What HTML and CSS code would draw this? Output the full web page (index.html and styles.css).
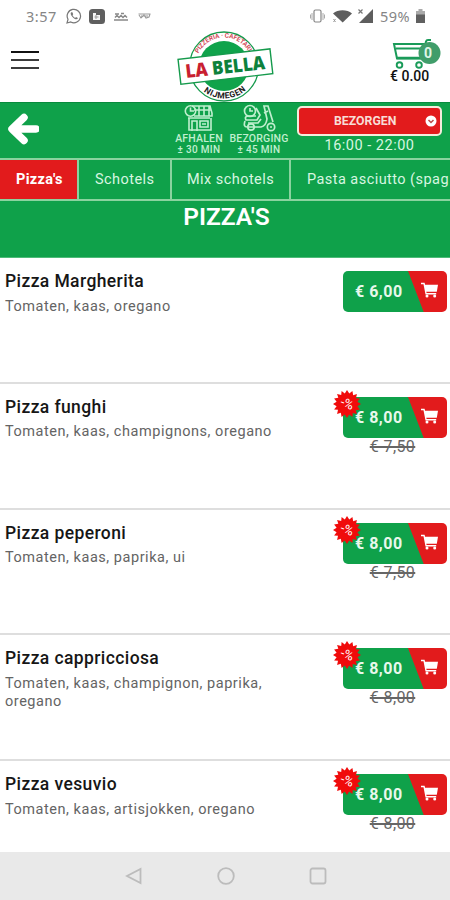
FILE: index.html
```html
<!DOCTYPE html>
<html lang="nl">
<head>
<meta charset="utf-8">
<title>La Bella</title>
<link rel="stylesheet" href="styles.css">
</head>
<body>
<svg class="sprite" aria-hidden="true">
  <symbol id="cart" viewBox="0 0 18 16">
    <path d="M0 .8h3.600l.5 2H17l-1.200 7H5.300l.3 1.200h9.600v1.400H4.500L2.500 2.200H0z"/>
    <circle cx="6" cy="14" r="1.500"/><circle cx="13.700" cy="14" r="1.500"/>
  </symbol>
  <symbol id="burst" viewBox="-14 -14 28 28">
    <path d="M0-14 2.300-10.400 5.400-12.900 6.200-8.700 9.900-9.900 9-5.800 12.900-5.400 10.400-2.200 14 0 10.400 2.300 12.900 5.400 8.700 6.200 9.900 9.900 5.800 9 5.400 12.900 2.200 10.400 0 14-2.300 10.400-5.400 12.900-6.200 8.700-9.900 9.900-9 5.800-12.900 5.400-10.400 2.200-14 0-10.400-2.300-12.900-5.400-8.700-6.200-9.900-9.900-5.800-9-5.400-12.900-2.200-10.400z"/>
  </symbol>
</svg>
<div class="screen">
  <div class="status">
    <span class="clock">3:57</span>
    <svg class="whatsapp" width="16" height="16" viewBox="0 0 16 16"><path d="M1 15l1-3.700A6.700 6.700 0 1 1 4.800 14z" fill="none" stroke="#777" stroke-width="1.200"/><path d="M5.200 4.200c-1 1-.6 2.600 1.300 4.700s4 3 5.100 1.900l.3-.8-1.900-1-.9.900C7.900 9.300 7 8.400 6.500 7.200l.7-.9-.8-2z" fill="#777"/></svg>
    <svg class="app" width="16" height="15" viewBox="0 0 16 15"><rect width="16" height="15" rx="3.500" fill="#5f5f5f"/><path d="M4 4h3v2h4v5H4z" fill="#f4f4f4"/><path d="M5.500 8h4M7 6v4" stroke="#999"/></svg>
    <svg class="people" width="16" height="9" viewBox="0 0 16 9"><path d="M1 8h14M2 5.500l2-2 2 2 2-2 2 2 2-2 2 2M2 2h4M8 1.500h3" fill="none" stroke="#888" stroke-width="1.500"/></svg>
    <svg class="mask" width="13" height="8" viewBox="0 0 13 8"><path d="M.5 2h12M1 3l2 3 3-3 2 3 3-1 1-3M3 4h7" fill="none" stroke="#999" stroke-width="1.100"/></svg>
    <span class="spacer"></span>
    <svg class="vibrate" width="15" height="14" viewBox="0 0 15 14"><rect x="4" y="1" width="7" height="12" rx="1.500" fill="none" stroke="#858585" stroke-width="1.200"/><path d="M2 4v7M13 4v7M.5 5.500v4M14.500 5.500v4" stroke="#aaa"/></svg>
    <svg class="wifi" width="19" height="13" viewBox="0 0 19 13"><path d="M0 3.500C5-.8 14-.8 19 3.500L9.700 12.500z" fill="#5e5e5e"/><path d="M.5 9l2 3M2.500 9l-2 3" stroke="#999"/></svg>
    <svg class="signal" width="15" height="14" viewBox="0 0 15 14"><path d="M15 0v14H1z" fill="#5e5e5e"/><path d="M.5.500l4 4M4.500.500l-4 4" stroke="#777" stroke-width="1.200"/></svg>
    <span class="percent">59%</span>
    <svg class="battery" width="9" height="14" viewBox="0 0 9 14"><path d="M2.500 0h4v2H9v12H0V2h2.500z" fill="#aaa"/><path d="M0 5.500h9V14H0z" fill="#606060"/></svg>
  </div>

  <header class="header">
    <div class="burger"><i></i><i></i><i></i></div>
    <svg class="logo" width="98" height="72" viewBox="176 30 98 72">
      <defs><path id="arc-top" d="M195.500 66a28.500 28.500 0 0 1 57 0"/><path id="arc-bottom" d="M191.500 66a32.500 32.500 0 0 0 65 0"/></defs>
      <circle cx="224" cy="66.500" r="34.500" fill="#fff" stroke="#159a4c" stroke-width="1.300"/>
      <circle cx="224" cy="66" r="25" fill="#10a34b"/>
      <text class="logo-top"><textPath href="#arc-top" startOffset="13" textLength="66">PIZZERIA · CAFETARIA</textPath></text>
      <text class="logo-bottom"><textPath href="#arc-bottom" startOffset="29" textLength="46">NIJMEGEN</textPath></text>
      <g transform="rotate(-6.500 225.500 65)">
        <rect x="179" y="54" width="92.500" height="25" fill="#fff" stroke="#159a4c" stroke-width="1.400"/>
        <text class="logo-name" x="185" y="73.500" textLength="80" lengthAdjust="spacingAndGlyphs"><tspan fill="#c91f31">LA</tspan><tspan fill="#0d813c"> BELLA</tspan></text>
      </g>
    </svg>
    <div class="basket">
      <svg width="50" height="30" viewBox="0 0 50 30">
        <path d="M3 5h31l-4 14.500H6zM5 9.500h26M31 19l4-16.500q.4-1.500 2-1.500H40" fill="none" stroke="#1a9b59" stroke-width="2"/>
        <path d="M6 19h25" stroke="#1a9b59" stroke-width="2.500"/>
        <circle cx="8.500" cy="26" r="2.800" fill="#fff" stroke="#1a9b59" stroke-width="1.900"/><circle cx="28" cy="26" r="2.800" fill="#fff" stroke="#1a9b59" stroke-width="1.900"/>
        <circle cx="38.500" cy="14" r="11" fill="#409d6a"/>
        <text class="count" x="37" y="19" text-anchor="middle">0</text>
      </svg>
      <div class="total">€ 0.00</div>
    </div>
  </header>

  <div class="service">
    <svg class="back" width="32" height="32" viewBox="0 0 32 32"><path d="M17 4.500 5 16 17 27.500M6 16h23" fill="none" stroke="#fff" stroke-width="7.500" stroke-linejoin="round" stroke-linecap="round"/></svg>
    <div class="method pickup">
      <svg width="30" height="28" viewBox="0 0 30 28"><g fill="none" stroke="#c0efcf" stroke-width="1.600"><path d="M8 2h18l2 7v3H10M5 14v12h22V14M8 27V17h5v10M16 17h8v6h-8zM10 6h17M15 2v10M20 2v10M25 2v10"/><circle cx="6.500" cy="7" r="5.200"/><path d="M6.500 3.500V7H10M18 20h4M4 14h22"/></g></svg>
      <span class="name">AFHALEN</span><span class="time">± 30 MIN</span>
    </div>
    <div class="method delivery">
      <svg width="34" height="28" viewBox="0 0 34 28"><g fill="none" stroke="#c0efcf" stroke-width="1.700"><circle cx="8" cy="7" r="5.500"/><path d="M8 4v3h3M14 4l4 7-3 5H4q-2-4 3-4h7M3 17q-2 6 2 6h14q5-1 6-8L22 2h4l5 16M22 9l4-2M6 19h10l3-4"/><circle cx="9" cy="23" r="3.200"/><circle cx="29" cy="23" r="3.700"/><path d="M28 23h2"/></g></svg>
      <span class="name">BEZORGING</span><span class="time">± 45 MIN</span>
    </div>
    <div class="choice">
      <div class="select"><span>BEZORGEN</span><svg width="12" height="12" viewBox="0 0 12 12"><circle cx="6" cy="6" r="5.500" fill="#fff"/><path d="M3.500 5 6 7.500 8.500 5" fill="none" stroke="#bd4b46" stroke-width="1.500"/></svg></div>
      <div class="hours">16:00 - 22:00</div>
    </div>
  </div>

  <nav class="tabs">
    <div class="tab active">Pizza's</div>
    <div class="tab schotels">Schotels</div>
    <div class="tab mix">Mix schotels</div>
    <div class="tab pasta">Pasta asciutto (spag</div>
  </nav>
  <h1 class="title">PIZZA'S</h1>

  <main class="menu">
    <article class="item">
      <div class="info"><h2>Pizza Margherita</h2><p>Tomaten, kaas, oregano</p></div>
      <div class="buy"><div class="button"><span>€ 6,00</span><svg class="cart"><use href="#cart"/></svg></div></div>
    </article>
    <article class="item">
      <div class="info"><h2>Pizza funghi</h2><p>Tomaten, kaas, champignons, oregano</p></div>
      <div class="buy"><div class="button"><span>€ 8,00</span><svg class="cart"><use href="#cart"/></svg></div><s>€ 7,50</s><div class="deal"><svg><use href="#burst"/></svg><b>-%</b></div></div>
    </article>
    <article class="item">
      <div class="info"><h2>Pizza peperoni</h2><p>Tomaten, kaas, paprika, ui</p></div>
      <div class="buy"><div class="button"><span>€ 8,00</span><svg class="cart"><use href="#cart"/></svg></div><s>€ 7,50</s><div class="deal"><svg><use href="#burst"/></svg><b>-%</b></div></div>
    </article>
    <article class="item">
      <div class="info"><h2>Pizza cappricciosa</h2><p>Tomaten, kaas, champignon, paprika, oregano</p></div>
      <div class="buy"><div class="button"><span>€ 8,00</span><svg class="cart"><use href="#cart"/></svg></div><s>€ 8,00</s><div class="deal"><svg><use href="#burst"/></svg><b>-%</b></div></div>
    </article>
    <article class="item">
      <div class="info"><h2>Pizza vesuvio</h2><p>Tomaten, kaas, artisjokken, oregano</p></div>
      <div class="buy"><div class="button"><span>€ 8,00</span><svg class="cart"><use href="#cart"/></svg></div><s>€ 8,00</s><div class="deal"><svg><use href="#burst"/></svg><b>-%</b></div></div>
    </article>
  </main>

  <footer class="navbar">
    <svg width="18" height="18" viewBox="0 0 18 18"><path d="M15.500 2v14L2 9z"/></svg>
    <svg width="18" height="18" viewBox="0 0 18 18"><circle cx="9" cy="9" r="7.800"/></svg>
    <svg width="18" height="18" viewBox="0 0 18 18"><rect x="1.500" y="1.500" width="15" height="15" rx="2"/></svg>
  </footer>
</div>
</body>
</html>
```
FILE: styles.css
```css
* { box-sizing: border-box; }
body { margin: 0; font-family: Roboto, "Liberation Sans", sans-serif; background: #fff; }
svg { display: block; flex: none; }
h1, h2, p { margin: 0; }
.sprite { position: absolute; width: 0; height: 0; }
.screen { width: 450px; height: 900px; overflow: hidden; display: flex; flex-direction: column; }

.status { height: 30px; flex: none; display: flex; align-items: center; padding: 2px 25px 0 26px; font-family: "Noto Sans", sans-serif; color: #858585; }
.clock { width: 40px; font-size: 14.5px; letter-spacing: .5px; }
.app { margin-left: 7px; }
.people { margin-left: 8px; }
.mask { margin-left: 9px; }
.spacer { flex: 1; }
.wifi { margin-left: 8px; }
.signal { margin-left: 6px; }
.percent { width: 36px; margin-left: 7px; font-size: 14.5px; letter-spacing: .4px; }

.header { height: 72px; flex: none; display: flex; align-items: flex-start; }
.burger { display: flex; flex-direction: column; gap: 6px; margin: 21px 0 0 11px; width: 28px; }
.burger i { height: 2px; background: #3b3b3b; }
.burger i:first-child { background: #111; }
.logo { margin-left: 137px; }
.logo-top { font: 700 6.5px Roboto, sans-serif; fill: #d34c58; }
.logo-bottom { font: 700 8.5px Roboto, sans-serif; fill: #222; }
.logo-name { font: 800 19px "Open Sans", sans-serif; }
.basket { margin: 9px 0 0 116px; width: 50px; }
.basket svg { margin-left: 1px; }
.count { font: 700 14px Roboto, sans-serif; fill: #e0f5e7; }
.total { width: 42px; font-size: 14px; font-weight: 500; line-height: 15px; color: #111; white-space: nowrap; }

.service { height: 58px; flex: none; background: #0fa14a; border-top: 1px solid #088b3d; border-bottom: 2px solid #8ad39f; display: flex; align-items: flex-start; color: #fff; }
.back { margin: 10px 0 0 7px; }
.method { display: flex; flex-direction: column; align-items: center; font-weight: 500; color: #c0efcf; white-space: nowrap; }
.method .time { font-size: 10px; line-height: 12px; height: 10px; margin-top: -1px; letter-spacing: .3px; }
.pickup { margin: 1px 0 0 134px; width: 52px; }
.delivery { margin: 1px 0 0 3px; width: 62px; }
.method .name { font-size: 10.5px; line-height: 12px; margin-top: 1px; letter-spacing: .2px; }
.choice { margin: 3px 0 0 7px; width: 145px; }
.select { height: 30px; border: 2px solid #f4ebdc; border-radius: 5px; background: #e21b1c; display: flex; align-items: center; padding-left: 35px; font-size: 12.3px; font-weight: 700; color: #f8ddd6; }
.select span { width: 91px; }
.hours { text-align: center; font-size: 14.5px; letter-spacing: .5px; line-height: 18px; margin-top: 1px; color: #d7f6e0; }

.tabs { height: 41px; flex: none; display: flex; background: #0fa14a; border-bottom: 2px solid #8ad39f; }
.tab { flex: none; border-right: 2px solid #8ad39f; padding: 10px 0 0 16px; font-size: 14.5px; line-height: 20px; letter-spacing: .45px; color: #d7f6e0; white-space: nowrap; }
.tab.active { width: 79px; background: #e21b1c; font-weight: 700; color: #fff; letter-spacing: .3px; }
.schotels { width: 93px; }
.mix { width: 119px; padding-left: 15px; }
.pasta { width: 159px; border-right: 0; }
.title { height: 57px; flex: none; background: #0fa14a; border-bottom: 1px solid #4dbb78; color: #fff; text-align: center; font-size: 24.5px; line-height: 32px; font-weight: 600; padding-left: 3px; }

.menu { height: 594px; flex: none; overflow: hidden; }
.item { height: 125.75px; border-bottom: 2px solid #dedede; display: flex; justify-content: space-between; }
.info { padding: 12px 0 0 5px; width: 290px; }
.info h2 { font-size: 17.5px; line-height: 22px; font-weight: 500; color: #161616; letter-spacing: .4px; }
.info p { font-size: 14.5px; line-height: 18px; margin-top: 5.5px; color: #646464; letter-spacing: .54px; }
.buy { position: relative; width: 104px; margin: 13px 3px 0 0; }
.button { height: 41px; border-radius: 5px; background: linear-gradient(69deg, #0fa14a 67%, #e21b1c 67.8%); display: flex; color: #e8f8ec; font-size: 16px; line-height: 41px; font-weight: 700; padding-left: 12px; letter-spacing: .5px; }
.button span { width: 66px; }
.cart { width: 18px; height: 16px; margin-top: 11px; fill: #fff; }
.buy s { display: block; text-align: center; font-size: 16px; line-height: 18px; color: #666; padding-right: 5px; letter-spacing: .4px; text-decoration-thickness: 1.5px; }
.deal { position: absolute; left: -10px; top: -7px; width: 28px; height: 28px; }
.deal svg { width: 28px; height: 28px; fill: #f00b0b; }
.deal b { position: absolute; inset: 0; text-align: center; font-size: 13px; line-height: 28px; font-weight: 400; color: #fff; transform: rotate(20deg); }

.navbar { height: 48px; flex: none; background: #e9e9e9; display: flex; justify-content: center; align-items: center; gap: 74px; padding-left: 2px; }
.navbar svg { fill: none; stroke: #bcbcbc; stroke-width: 1.8; }
```
